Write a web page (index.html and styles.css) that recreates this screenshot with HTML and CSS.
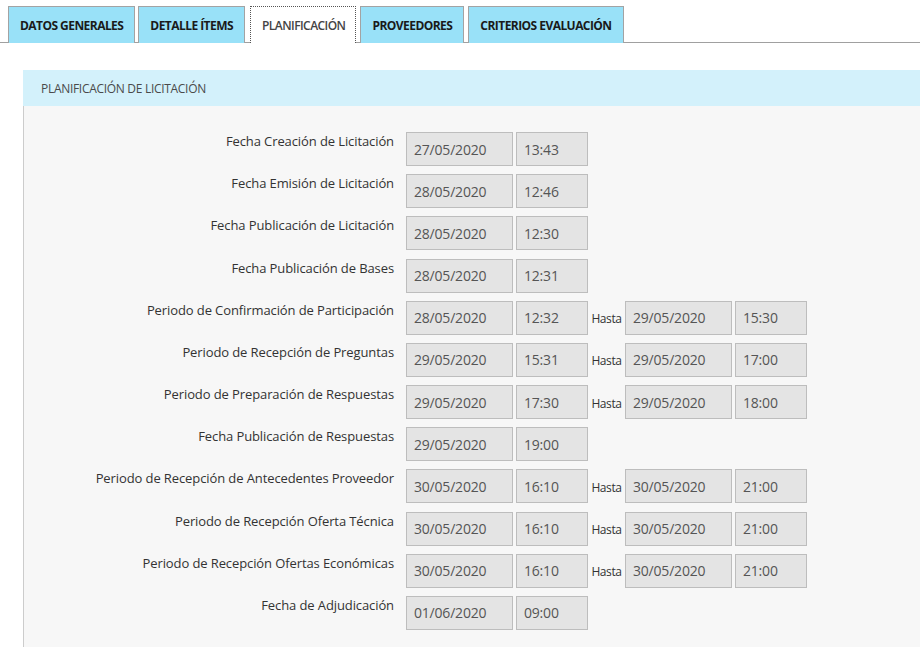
FILE: index.html
```html
<!DOCTYPE html>
<html lang="es">
<head>
<meta charset="utf-8">
<title>Planificación</title>
<link rel="stylesheet" href="styles.css">
</head>
<body>
<div class="tabs">
  <div class="tab">DATOS GENERALES</div>
  <div class="tab">DETALLE ÍTEMS</div>
  <div class="tab active">PLANIFICACIÓN</div>
  <div class="tab">PROVEEDORES</div>
  <div class="tab">CRITERIOS EVALUACIÓN</div>
</div>
<div class="panel">
  <div class="panel-head">PLANIFICACIÓN DE LICITACIÓN</div>
  <div class="panel-body">
    <div class="row"><div class="lbl">Fecha Creación de Licitación</div><div class="f date">27/05/2020</div><div class="f time">13:43</div></div>
    <div class="row"><div class="lbl">Fecha Emisión de Licitación</div><div class="f date">28/05/2020</div><div class="f time">12:46</div></div>
    <div class="row"><div class="lbl">Fecha Publicación de Licitación</div><div class="f date">28/05/2020</div><div class="f time">12:30</div></div>
    <div class="row"><div class="lbl">Fecha Publicación de Bases</div><div class="f date">28/05/2020</div><div class="f time">12:31</div></div>
    <div class="row"><div class="lbl">Periodo de Confirmación de Participación</div><div class="f date">28/05/2020</div><div class="f time">12:32</div><div class="hasta">Hasta</div><div class="f date">29/05/2020</div><div class="f time">15:30</div></div>
    <div class="row"><div class="lbl">Periodo de Recepción de Preguntas</div><div class="f date">29/05/2020</div><div class="f time">15:31</div><div class="hasta">Hasta</div><div class="f date">29/05/2020</div><div class="f time">17:00</div></div>
    <div class="row"><div class="lbl">Periodo de Preparación de Respuestas</div><div class="f date">29/05/2020</div><div class="f time">17:30</div><div class="hasta">Hasta</div><div class="f date">29/05/2020</div><div class="f time">18:00</div></div>
    <div class="row"><div class="lbl">Fecha Publicación de Respuestas</div><div class="f date">29/05/2020</div><div class="f time">19:00</div></div>
    <div class="row"><div class="lbl">Periodo de Recepción de Antecedentes Proveedor</div><div class="f date">30/05/2020</div><div class="f time">16:10</div><div class="hasta">Hasta</div><div class="f date">30/05/2020</div><div class="f time">21:00</div></div>
    <div class="row"><div class="lbl">Periodo de Recepción Oferta Técnica</div><div class="f date">30/05/2020</div><div class="f time">16:10</div><div class="hasta">Hasta</div><div class="f date">30/05/2020</div><div class="f time">21:00</div></div>
    <div class="row"><div class="lbl">Periodo de Recepción Ofertas Económicas</div><div class="f date">30/05/2020</div><div class="f time">16:10</div><div class="hasta">Hasta</div><div class="f date">30/05/2020</div><div class="f time">21:00</div></div>
    <div class="row"><div class="lbl">Fecha de Adjudicación</div><div class="f date">01/06/2020</div><div class="f time">09:00</div></div>
  </div>
</div>
</body>
</html>
```

FILE: styles.css
```css
html, body {
  margin: 0;
  padding: 0;
  background: #ffffff;
  font-family: "Open Sans", "Noto Sans", sans-serif;
  color: #333333;
  overflow: hidden;
}

.tabs {
  display: flex;
  align-items: flex-end;
  padding: 6px 0 0 8px;
  border-bottom: 1px solid #a0a0a0;
  height: 36px;
  box-sizing: content-box;
}

.tab {
  box-sizing: border-box;
  height: 37px;
  margin-bottom: -1px;
  margin-right: 4px;
  padding: 0 11px;
  display: flex;
  align-items: center;
  background: #99e1f8;
  border: 1px solid #a3a3a3;
  border-bottom: none;
  font-size: 12px;
  font-weight: 700;
  letter-spacing: -0.55px;
  color: #1a1a1a;
  white-space: nowrap;
}

.tab:first-child { margin-right: 3px; }

.tab.active {
  background: #ffffff;
  border: 1px dotted #555555;
  border-bottom: none;
  padding: 0 10px 0 11px;
  margin-left: 1px;
  font-weight: 600;
  color: #444444;
}

.panel {
  margin: 27px 0 0 23px;
}

.panel-head {
  height: 36px;
  display: flex;
  align-items: center;
  padding-left: 18px;
  background: #d3f1fb;
  font-size: 12px;
  letter-spacing: -0.3px;
  color: #4a4a4a;
}

.panel-body {
  background: #f7f7f7;
  border-left: 1px solid #cccccc;
  padding: 26px 0 60px 0;
  display: flex;
  flex-direction: column;
  gap: 8.18px;
}

.row {
  display: flex;
  align-items: center;
  height: 34px;
}

.lbl {
  box-sizing: border-box;
  width: 382px;
  padding-right: 12px;
  align-self: flex-start;
  text-align: right;
  font-size: 13px;
  line-height: 19px;
  letter-spacing: -0.1px;
  color: #333333;
  white-space: nowrap;
}

.f {
  box-sizing: border-box;
  height: 34px;
  display: flex;
  align-items: center;
  padding-left: 7px;
  background: #e4e4e4;
  border: 1px solid #bdbdbd;
  font-size: 14px;
  letter-spacing: -0.2px;
  color: #555555;
}

.f.date { width: 107px; }
.f.time { width: 72px; }
.f + .f { margin-left: 3px; }

.hasta {
  width: 37px;
  text-align: center;
  font-size: 12px;
  letter-spacing: -0.4px;
  color: #333333;
  padding-top: 2px;
}
```
